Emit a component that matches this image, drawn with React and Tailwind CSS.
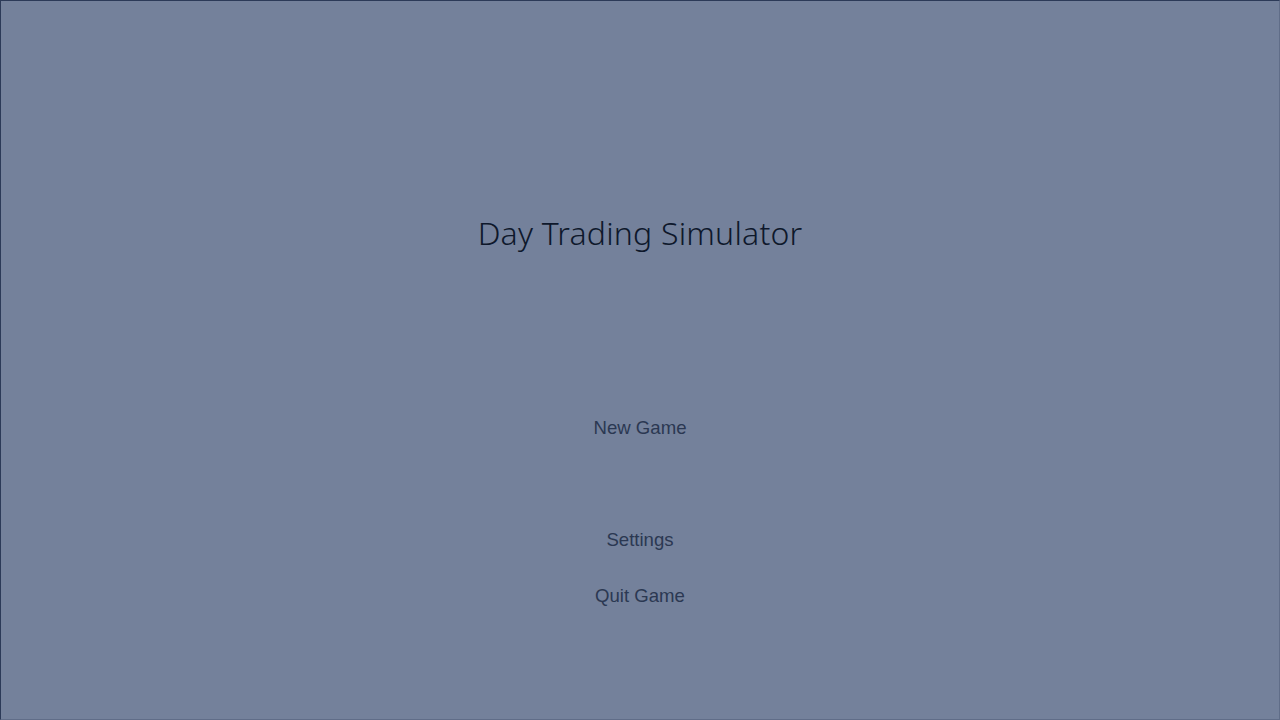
export default function App() {
  const btn = "h-[56px] flex items-center justify-center text-[18.6px] text-[#2b3852] leading-none";
  return (
    <div className="w-[1280px] h-[720px] bg-[#74819b] border-t border-l border-t-[#2c3a58] border-l-[#2c3a58] border-r border-b border-r-[#606d88] border-b-[#606d88] flex flex-col items-center overflow-hidden" style={{ fontFamily: '"Liberation Sans", Arial, sans-serif' }}>
      <div className="h-[466px] w-full flex flex-col items-center">
        <h1 className="mt-[210px] text-[32px] leading-[44px] text-[#0e182b] tracking-[0.2px]" style={{ fontFamily: '"Noto Sans", sans-serif', fontWeight: 300 }}>
          Day Trading Simulator
        </h1>
      </div>
      <div className="flex flex-col items-center w-full" style={{ marginTop: -67 }}>
        <div className={btn}>New Game</div>
        <div className="h-[56px]"></div>
        <div className={btn}>Settings</div>
        <div className={btn}>Quit Game</div>
      </div>
    </div>
  );
}
